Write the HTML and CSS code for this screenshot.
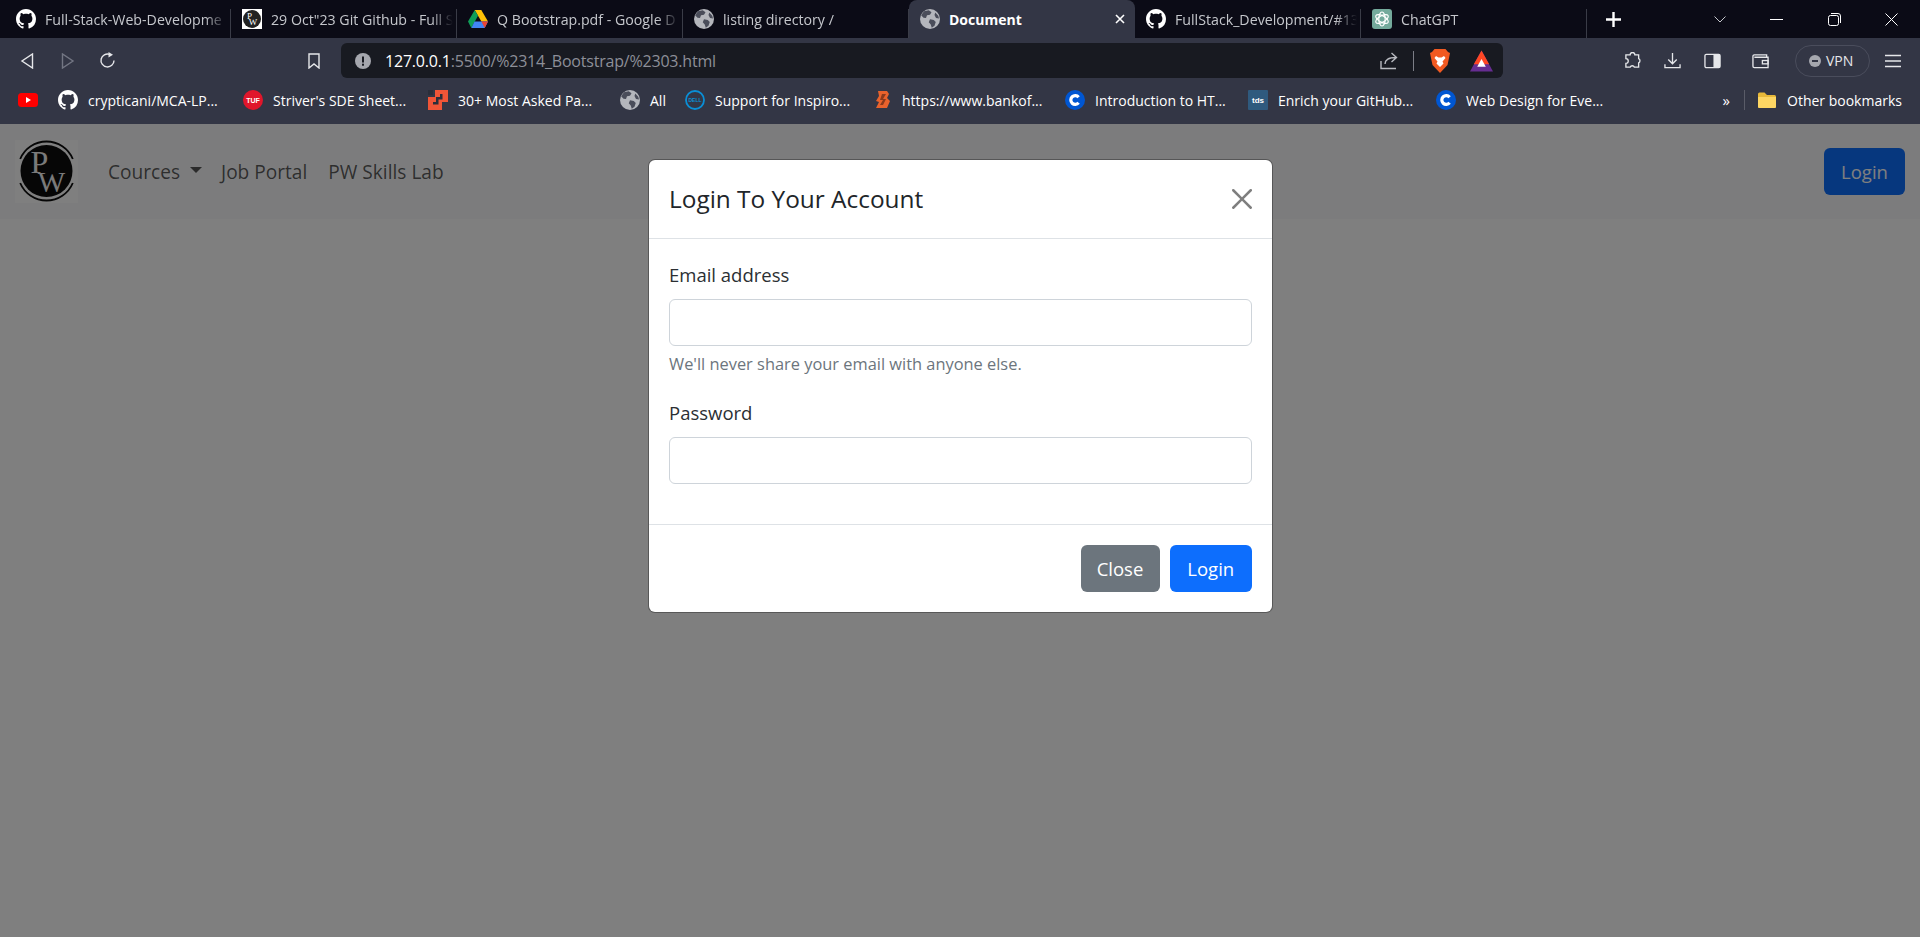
FILE: index.html
```html
<!DOCTYPE html>
<html lang="en">
<head>
<meta charset="utf-8">
<title>Document</title>
<link rel="stylesheet" href="styles.css">
</head>
<body>
<svg class="defs" width="0" height="0" aria-hidden="true">
  <symbol id="gh" viewBox="0 0 16 16"><path fill="#fff" d="M8 0C3.58 0 0 3.58 0 8c0 3.54 2.29 6.53 5.47 7.59.4.07.55-.17.55-.38 0-.19-.01-.82-.01-1.49-2.01.37-2.53-.49-2.69-.94-.09-.23-.48-.94-.82-1.13-.28-.15-.68-.52-.01-.53.63-.01 1.08.58 1.23.82.72 1.21 1.87.87 2.33.66.07-.52.28-.87.51-1.07-1.78-.2-3.64-.89-3.64-3.95 0-.87.31-1.59.82-2.15-.08-.2-.36-1.02.08-2.12 0 0 .67-.21 2.2.82.64-.18 1.32-.27 2-.27.68 0 1.36.09 2 .27 1.53-1.04 2.2-.82 2.2-.82.44 1.1.16 1.92.08 2.12.51.56.82 1.27.82 2.15 0 3.07-1.87 3.75-3.65 3.95.29.25.54.73.54 1.48 0 1.07-.01 1.93-.01 2.2 0 .21.15.46.55.38A8.013 8.013 0 0016 8c0-4.42-3.58-8-8-8z"/></symbol>
  <symbol id="globe" viewBox="0 0 16 16"><circle cx="8" cy="8" r="8" fill="#b4b6bc"/><path fill="#4a4d5a" d="M3.2 1.700 7 1 9.200 2.600 8 4.600 5.600 5 4.800 7.200 2.800 7 .9 5ZM8 8.200l3 .6 1.600 1.600-1 3-2.200 1.600-.8-2.600L7 10.600ZM12.200 2.800l2.400 2.600.6 2.200-2.400-.4-1.200-2.400Z"/></symbol>
  <symbol id="cc" viewBox="0 0 20 20"><circle cx="10" cy="10" r="10" fill="#0056d2"/><path fill="none" stroke="#fff" stroke-width="3.200" d="M13.600 7.200a4.400 4.400 0 1 0 0 5.600"/></symbol>
</svg>

<header class="chrome">
  <div class="tabstrip">
    <div class="tab"><svg class="fav"><use href="#gh"/></svg><span class="tab-title">Full-Stack-Web-Developme</span></div>
    <div class="tab"><svg class="fav" viewBox="0 0 20 20"><rect width="20" height="20" fill="#fff"/><circle cx="10" cy="10" r="9" fill="#222"/><text x="7.500" y="10" class="fav-p">P</text><text x="11" y="15.500" class="fav-p">W</text></svg><span class="tab-title">29 Oct"23 Git Github - Full S</span></div>
    <div class="tab"><svg class="fav" viewBox="0 0 20 18"><path fill="#ffc107" d="M6.700 0h6.600L20 11.600h-6.600z"/><path fill="#0f9d58" d="M6.700 0 10 5.800 3.300 18 0 11.600z"/><path fill="#4285f4" d="M6.600 11.600H20L16.700 18H3.300z"/><path fill="#ea4335" d="M13.400 11.600H20L16.700 18z"/></svg><span class="tab-title">Q Bootstrap.pdf - Google D</span></div>
    <div class="tab"><svg class="fav"><use href="#globe"/></svg><span class="tab-title">listing directory /</span></div>
    <div class="tab active"><svg class="fav"><use href="#globe"/></svg><span class="tab-title">Document</span><svg class="tab-x" viewBox="0 0 10 10"><path d="M1 1l8 8M9 1l-8 8"/></svg></div>
    <div class="tab"><svg class="fav"><use href="#gh"/></svg><span class="tab-title">FullStack_Development/#13</span></div>
    <div class="tab"><svg class="fav" viewBox="0 0 20 20"><rect width="20" height="20" rx="3" fill="#74aa9c"/><g fill="none" stroke="#fff" stroke-width="1.200"><ellipse cx="10" cy="10" rx="3.200" ry="7"/><ellipse cx="10" cy="10" rx="3.200" ry="7" transform="rotate(60 10 10)"/><ellipse cx="10" cy="10" rx="3.200" ry="7" transform="rotate(120 10 10)"/></g></svg><span class="tab-title">ChatGPT</span></div>
    <div class="strip-actions">
      <svg class="plus" viewBox="0 0 15 15"><path d="M7.500 0v15M0 7.500h15"/></svg>
      <svg class="chev" viewBox="0 0 12 7"><path d="M.5.5 6 6 11.500.5"/></svg>
      <svg class="win-min" viewBox="0 0 13 1"><path d="M0 .5h13"/></svg>
      <svg class="win-max" viewBox="0 0 13 13"><rect x=".5" y="2.500" width="10" height="10" rx="2"/><path d="M3 .5h7a2.500 2.500 0 0 1 2.500 2.500v7"/></svg>
      <svg class="win-x" viewBox="0 0 13 13"><path d="M.5.5l12 12M12.500.5l-12 12"/></svg>
    </div>
  </div>

  <div class="toolbar">
    <svg class="tb-ic back" viewBox="0 0 14 16"><path d="M12.500 1v14L2 8z"/></svg>
    <svg class="tb-ic fwd" viewBox="0 0 14 16"><path d="M1.500 1v14L12 8z"/></svg>
    <svg class="tb-ic reload" viewBox="0 0 17 17"><path d="M15 8.500A6.500 6.500 0 1 1 10.600 2.300"/><path class="solid" d="M9.500 0l4.500 2.800-4.500 2.800z"/></svg>
    <svg class="tb-ic mark" viewBox="0 0 12 16"><path d="M1 1h10v14L6 11l-5 4z"/></svg>
    <div class="omnibox">
      <svg class="warn" viewBox="0 0 16 16"><circle cx="8" cy="8" r="8" fill="#a5a7ae"/><rect x="7" y="3.500" width="2" height="6" fill="#181a21"/><rect x="7" y="10.700" width="2" height="2" fill="#181a21"/></svg>
      <div class="url"><span class="host">127.0.0.1</span>:5500/%2314_Bootstrap/%2303.html</div>
      <svg class="tb-ic share" viewBox="0 0 18 18"><path d="M1 9v7.500h15M5 12c0-4 3-6.500 11-6.500M11.500 1l5 4.500-5 4.500"/></svg>
      <span class="omni-sep"></span>
      <svg class="brave" viewBox="0 0 20 24"><path fill="#f15a22" d="M4.500 0h11L18 3l2 1-1 5-1.500 7L10 24l-7.500-8L1 9 0 4l2-1z"/><path fill="#fff" d="M6 7l2.500 1.500h3L14 7l1.500 2-3 3.500 1 2L10 18l-3.500-3.500 1-2L4.500 9z"/></svg>
      <svg class="bat" viewBox="0 0 24 22"><path fill="#662d91" d="M12 0 24 22H0z"/><path fill="#ff4724" d="M12 0 20 14.500H4z"/><path fill="#fff" d="M12 9l4.500 8h-9z"/></svg>
    </div>
    <svg class="tb-ic puzzle" viewBox="0 0 18 18"><path d="M6.500 3.500a2.500 2.500 0 0 1 5 0h4v4a2.500 2.500 0 0 1 0 4.500v4.500h-4.500a2.500 2.500 0 0 0-4.500 0H2v-4a2.500 2.500 0 0 0 0-5v-4z" transform="translate(0 -.5)"/></svg>
    <svg class="tb-ic dl" viewBox="0 0 18 18"><path d="M9 1v11M4.500 8 9 12.500 13.500 8M1 13v3.500h16V13"/></svg>
    <svg class="tb-ic side" viewBox="0 0 18 16"><rect x="1" y="1" width="16" height="14" rx="1.500"/><rect class="solid" x="10" y="1" width="7" height="14"/></svg>
    <svg class="tb-ic wallet" viewBox="0 0 18 16"><path d="M15.500 4V1.500h-13A1.500 1.500 0 0 0 1 3v10.500A1.500 1.500 0 0 0 2.500 15H17V4H2.500"/><rect x="11" y="7.500" width="6" height="3.500"/></svg>
    <div class="vpn"><span class="vpn-dot"></span>VPN</div>
    <svg class="tb-ic menu" viewBox="0 0 16 14"><path d="M0 1.500h16M0 7h16M0 12.500h16"/></svg>
  </div>

  <nav class="bookmarks">
    <div class="bm"><svg class="bm-ic yt" viewBox="0 0 20 14"><rect width="20" height="14" rx="3.500" fill="#f00"/><path fill="#fff" d="M8 4l5 3-5 3z"/></svg></div>
    <div class="bm"><svg class="bm-ic"><use href="#gh"/></svg><span>crypticani/MCA-LP...</span></div>
    <div class="bm"><svg class="bm-ic" viewBox="0 0 20 20"><circle cx="10" cy="10" r="10" fill="#e0162b"/><text x="10" y="12.500" class="tuf">TUF</text></svg><span>Striver's SDE Sheet...</span></div>
    <div class="bm"><svg class="bm-ic" viewBox="0 0 20 20"><path fill="#f05537" d="M7 0h13v12h-6v8H0V7h7z"/><path fill="#2b2e3a" d="M0 0h5v5H0zM5 12h3V7h4V4h2.500v5.500h-4V14.500H5z"/></svg><span>30+ Most Asked Pa...</span></div>
    <div class="bm"><svg class="bm-ic"><use href="#globe"/></svg><span>All</span></div>
    <div class="bm"><svg class="bm-ic" viewBox="0 0 20 20"><circle cx="10" cy="10" r="9" fill="none" stroke="#0a8fd6" stroke-width="1.800"/><text x="10" y="11.800" class="dell">DELL</text></svg><span>Support for Inspiro...</span></div>
    <div class="bm"><svg class="bm-ic bank" viewBox="0 0 18 20"><path fill="#e8622c" d="M4 1h9l2 3-2 4 3 3-3 7H2l3-6-3-1 3-5z"/><path fill="#8a3a1c" d="M8 4h4L9 9h3l-3 6h-3l3-5H6z"/></svg><span>https://www.bankof...</span></div>
    <div class="bm"><svg class="bm-ic"><use href="#cc"/></svg><span>Introduction to HT...</span></div>
    <div class="bm"><svg class="bm-ic" viewBox="0 0 20 20"><rect width="20" height="20" rx="1" fill="#2f5a7e"/><text x="10" y="12.500" class="tds">tds</text></svg><span>Enrich your GitHub...</span></div>
    <div class="bm"><svg class="bm-ic"><use href="#cc"/></svg><span>Web Design for Eve...</span></div>
    <div class="bm-end">
      <span class="more">»</span>
      <span class="bm-sep"></span>
      <svg class="folder" viewBox="0 0 18 16"><path fill="#e8b93a" d="M0 2a1.500 1.500 0 0 1 1.500-1.500h5L9 3h7.500A1.500 1.500 0 0 1 18 4.500v10a1.500 1.500 0 0 1-1.500 1.500h-15A1.500 1.500 0 0 1 0 14.500z"/><path fill="#fdd663" d="M0 5h18v9.500a1.500 1.500 0 0 1-1.500 1.500h-15A1.500 1.500 0 0 1 0 14.500z"/></svg>
      <span>Other bookmarks</span>
    </div>
  </nav>
</header>

<main class="page">
  <nav class="navbar">
    <svg class="logo" viewBox="0 0 63 63"><rect width="63" height="63" fill="#fff"/><circle cx="31.500" cy="31" r="26" fill="#0c0c0c"/><path class="ring" d="M5.200 19A28.500 28.500 0 0 1 57.800 19M57.800 43A28.500 28.500 0 0 1 5.200 43"/><text x="24.500" y="33" class="logo-p">P</text><text x="36.500" y="52" class="logo-w">W</text></svg>
    <a class="nav-link nav-courses">Cources<span class="caret"></span></a>
    <a class="nav-link">Job Portal</a>
    <a class="nav-link">PW Skills Lab</a>
    <button class="btn btn-primary nav-login">Login</button>
  </nav>

  <div class="backdrop"></div>

  <section class="modal">
    <div class="modal-header">
      <h1 class="modal-title">Login To Your Account</h1>
      <svg class="btn-close" viewBox="0 0 16 16"><path d="M.293.293a1 1 0 0 1 1.414 0L8 6.586 14.293.293a1 1 0 1 1 1.414 1.414L9.414 8l6.293 6.293a1 1 0 0 1-1.414 1.414L8 9.414l-6.293 6.293a1 1 0 0 1-1.414-1.414L6.586 8 .293 1.707a1 1 0 0 1 0-1.414z"/></svg>
    </div>
    <form class="modal-body">
      <div class="field">
        <label class="form-label">Email address</label>
        <input class="form-control" type="email">
        <div class="form-text">We'll never share your email with anyone else.</div>
      </div>
      <div class="field">
        <label class="form-label">Password</label>
        <input class="form-control" type="password">
      </div>
    </form>
    <div class="modal-footer">
      <button class="btn btn-secondary">Close</button>
      <button class="btn btn-primary btn-login">Login</button>
    </div>
  </section>
</main>
</body>
</html>
```

FILE: styles.css
```css
* { box-sizing: border-box; }
html, body { margin: 0; height: 937px; overflow: hidden; }
body { display: flex; flex-direction: column; background: #fff; font-family: "Open Sans", "Liberation Sans", sans-serif; }
.defs { display: block; height: 0; }

/* browser chrome */
.chrome { flex: none; height: 124px; background: #333645; color: #fff; }
.tabstrip { height: 38px; background: #0b0b16; display: grid; grid-template-columns: repeat(7, 226px) 1fr; padding-left: 5px; }
.tab { position: relative; display: flex; align-items: center; padding-left: 11px; gap: 9px; font-size: 14.200px; color: #c5c7cc; height: 38px; min-width: 0; }
.tab::after { content: ""; position: absolute; right: 0; top: 9px; bottom: 0; width: 1px; background: #3a3c47; }
.tab.active { background: #333645; border-radius: 8px 8px 0 0; color: #fff; font-weight: 700; font-size: 14px; }
.tab.active::after { display: none; }
.fav { width: 20px; height: 20px; flex: none; }
.fav-p { font: 9px "Liberation Serif", serif; fill: #fff; text-anchor: middle; }
.tab-title { flex: 1; min-width: 0; margin-right: 4px; white-space: nowrap; overflow: hidden; -webkit-mask-image: linear-gradient(to right, #000 88%, transparent 100%); mask-image: linear-gradient(to right, #000 88%, transparent 100%); }
.tab.active .tab-title { -webkit-mask-image: none; mask-image: none; }
.tab-x { width: 10px; height: 10px; flex: none; margin-right: 10px; fill: none; stroke: #fff; stroke-width: 1.600; }
.strip-actions { display: flex; align-items: center; padding-left: 19px; height: 38px; }
.strip-actions svg { flex: none; fill: none; stroke: #fff; }
.plus { width: 15px; height: 15px; stroke-width: 2.400; margin-right: 93px; }
.chev { width: 12px; height: 7px; stroke-width: 1; margin-right: 44px; }
.strip-actions .chev { stroke: #c5c7cc; }
.win-min { width: 13px; height: 1px; margin-right: 45px; }
.win-max { width: 13px; height: 13px; margin-right: 44px; }
.win-x { width: 13px; height: 13px; }

.toolbar { height: 45px; display: flex; align-items: center; padding-left: 20px; }
.tb-ic { flex: none; fill: none; stroke: #e6e7ea; stroke-width: 1.400; }
.tb-ic .solid { fill: #e6e7ea; stroke: none; }
.back { width: 14px; height: 16px; margin-right: 27px; }
.tb-ic.fwd { width: 14px; height: 16px; margin-right: 24px; stroke: #737683; }
.reload { width: 17px; height: 17px; margin-right: 192px; }
.mark { width: 12px; height: 16px; margin-right: 21px; }
.omnibox { width: 1162px; height: 35px; margin-right: 121px; background: #181a21; border-radius: 6px; display: flex; align-items: center; padding-left: 14px; flex: none; }
.warn { width: 16px; height: 16px; flex: none; margin-right: 14px; }
.url { flex: 1; font-size: 16px; color: #8d8f98; white-space: nowrap; letter-spacing: -.2px; }
.host { color: #fff; }
.tb-ic.share { width: 18px; height: 18px; margin-right: 15px; stroke: #b8bac0; }
.omni-sep { width: 1px; height: 20px; background: #7c7e87; margin-right: 16px; }
.brave { width: 20px; height: 24px; flex: none; margin-right: 20px; }
.bat { width: 23px; height: 22px; flex: none; margin-right: 10px; }
.puzzle { width: 17px; height: 17px; margin-right: 23px; }
.dl { width: 17px; height: 17px; margin-right: 23px; }
.side { width: 17px; height: 16px; margin-right: 31px; }
.wallet { width: 17px; height: 16px; margin-right: 26px; }
.vpn { width: 75px; height: 32px; border: 1px solid #4a4d5c; border-radius: 16px; display: flex; align-items: center; padding-left: 13px; gap: 5px; font-size: 14px; color: #e6e7ea; margin-right: 15px; flex: none; }
.vpn-dot { width: 12px; height: 12px; border-radius: 50%; background: #a5a7ae; position: relative; flex: none; }
.vpn-dot::after { content: ""; position: absolute; left: 3px; right: 3px; top: 5px; height: 2px; background: #333645; }
.menu { width: 16px; height: 14px; }

.bookmarks { height: 41px; display: grid; grid-template-columns: 40px 185px 185px 192px 65px 189px 191px 183px 188px 272px 1fr; padding: 0 0 7px 18px; align-items: center; font-size: 14px; }
.bm { display: flex; align-items: center; gap: 10px; white-space: nowrap; min-width: 0; }
.bm-ic { width: 20px; height: 20px; flex: none; }
.yt { height: 14px; }
.bank { width: 18px; }
.tuf { font: 700 7px "Liberation Sans", sans-serif; fill: #fff; text-anchor: middle; }
.dell { font: 700 5px "Liberation Sans", sans-serif; fill: #0a8fd6; text-anchor: middle; }
.tds { font: 700 8px "Liberation Sans", sans-serif; fill: #fff; text-anchor: middle; }
.bm-end { display: flex; align-items: center; white-space: nowrap; }
.more { width: 22px; text-align: right; font-size: 15px; margin-right: 14px; }
.bm-sep { width: 1px; height: 20px; background: #5a5c68; margin-right: 13px; }
.folder { width: 18px; height: 16px; flex: none; margin-right: 11px; }

/* page under the modal */
.page { position: relative; flex: 1; min-height: 0; color: #212529; }
.navbar { height: 95px; background: #f8f9fa; display: flex; align-items: center; padding: 0 15px; }
.logo { width: 63px; height: 63px; flex: none; margin-right: 30px; }
.ring { fill: none; stroke: #0c0c0c; stroke-width: 1.800; }
.logo-p, .logo-w { font-family: "Liberation Serif", serif; fill: #f4f4f4; text-anchor: middle; }
.logo-p { font-size: 32px; }
.logo-w { font-size: 29px; }
.nav-link { font-size: 19.100px; color: rgba(0, 0, 0, .65); margin-right: 21px; padding-top: 1px; display: flex; align-items: center; }
.nav-courses { margin-right: 19px; }
.caret { width: 0; height: 0; margin-left: 10px; margin-top: -4px; border: 6px solid transparent; border-top-color: rgba(0, 0, 0, .65); border-bottom: 0; }
.btn { height: 47px; border: 0; border-radius: 6px; padding: 0; color: #fff; font-family: inherit; font-size: 18.500px; }
.btn-primary { background: #0d6efd; }
.btn-secondary { background: #6c757d; width: 79px; }
.btn-login { width: 82.500px; }
.nav-login { width: 81px; margin-left: auto; }

.backdrop { position: absolute; inset: 0; background: rgba(0, 0, 0, .5); }
.modal { position: absolute; left: 649px; top: 36px; width: 623px; background: #fff; border-radius: 6px; box-shadow: 0 0 0 1px rgba(0, 0, 0, .3); }
.modal-header { display: flex; align-items: center; justify-content: space-between; height: 79px; padding: 0 20px; border-bottom: 1px solid #dee2e6; }
.modal-title { margin: 0; padding-top: 1px; font-size: 24.400px; font-weight: 500; line-height: 1.5; color: #212529; }
.btn-close { width: 20px; height: 20px; fill: #000; opacity: .5; }
.modal-body { padding: 20px 20px 40px; display: flex; flex-direction: column; gap: 20px; }
.form-label { display: block; padding-top: 1px; font-size: 18.500px; line-height: 30px; margin-bottom: 9px; color: #2b2f33; }
.form-control { display: block; width: 100%; height: 47px; border: 1px solid #ced4da; border-radius: 6px; background: #fff; }
.form-text { margin-top: 5px; font-size: 16.400px; line-height: 26px; color: #6c757d; }
.modal-footer { display: flex; justify-content: flex-end; gap: 10px; padding: 20px; border-top: 1px solid #dee2e6; }
```
